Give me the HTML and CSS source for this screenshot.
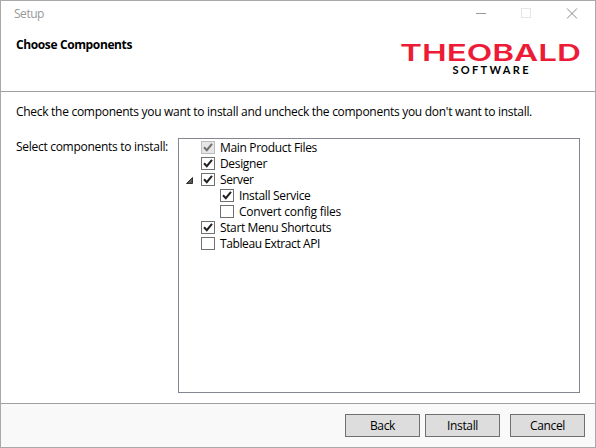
FILE: index.html
```html
<!DOCTYPE html>
<html lang="en">
<head>
<meta charset="utf-8">
<title>Setup</title>
<link rel="stylesheet" href="styles.css">
</head>
<body>
<main class="window">
  <header class="header">
    <div class="titlebar">
      <span class="caption">Setup</span>
      <svg class="controls" width="110" height="14" viewBox="0 0 110 14" fill="none">
        <path d="M6 6.5h10" stroke="#999"/>
        <rect x="51.5" y="1.5" width="9" height="9" stroke="#e6e6e6"/>
        <path d="M97 1.5l10 10M107 1.5l-10 10" stroke="#888"/>
      </svg>
    </div>
    <div class="banner">
      <h1 class="heading">Choose Components</h1>
      <svg class="logo" width="184" height="44" viewBox="0 -6 184 44">
        <text class="logo-name" x="1" y="18.5" textLength="181" lengthAdjust="spacingAndGlyphs">THEOBALD</text>
        <text class="logo-sub" x="53.5" y="31.5" textLength="76">SOFTWARE</text>
      </svg>
    </div>
  </header>
  <section class="content">
    <p class="intro">Check the components you want to install and uncheck the components you don't want to install.</p>
    <div class="selector">
      <span class="label">Select components to install:</span>
      <ul class="tree">
        <li class="item"><span class="box disabled"><svg viewBox="0 0 12 11"><path d="M2 5.2l2.8 3L10 1.8"/></svg></span><span class="t-main">Main Product Files</span></li>
        <li class="item"><span class="box"><svg viewBox="0 0 12 11"><path d="M2 5.2l2.8 3L10 1.8"/></svg></span><span class="t-designer">Designer</span></li>
        <li class="item parent"><svg class="arrow" width="7" height="7" viewBox="0 0 7 7"><path d="M6.5 .5v6h-6z"/></svg><span class="box"><svg viewBox="0 0 12 11"><path d="M2 5.2l2.8 3L10 1.8"/></svg></span><span class="t-server">Server</span></li>
        <li class="item child"><span class="box"><svg viewBox="0 0 12 11"><path d="M2 5.2l2.8 3L10 1.8"/></svg></span><span class="t-service">Install Service</span></li>
        <li class="item child"><span class="box"></span><span class="t-convert">Convert config files</span></li>
        <li class="item"><span class="box"><svg viewBox="0 0 12 11"><path d="M2 5.2l2.8 3L10 1.8"/></svg></span><span class="t-start">Start Menu Shortcuts</span></li>
        <li class="item"><span class="box"></span><span class="t-tableau">Tableau Extract API</span></li>
      </ul>
    </div>
  </section>
  <footer class="footer">
    <button class="button">Back</button>
    <button class="button">Install</button>
    <button class="button cancel">Cancel</button>
  </footer>
</main>
</body>
</html>
```
FILE: styles.css
```css
* { box-sizing: border-box; }
body {
  margin: 0;
  font: 12px/16px "Open Sans", "Noto Sans", sans-serif;
  letter-spacing: -0.35px;
  color: #000;
}
.window {
  display: flex;
  flex-direction: column;
  width: 596px;
  height: 448px;
  border: 1px solid #a9a9a9;
  background: #fff;
}
.header { height: 91px; border-bottom: 1px solid #a0a0a0; }
.titlebar {
  display: flex;
  justify-content: space-between;
  height: 28px;
  padding: 5px 13px 0;
  color: #999;
}
.caption { letter-spacing: -0.46px; }
.controls { margin: 1px 2px 0 0; }
.banner {
  display: flex;
  justify-content: space-between;
  padding: 8px 12px 0 15px;
}
.heading { margin: 0; font-size: 12px; line-height: 16px; letter-spacing: -0.38px; }
.logo { margin-top: -1px; overflow: visible; }
.logo-name {
  font: 600 22.5px "Inter", sans-serif;
  letter-spacing: 0;
  fill: #ed1b36;
}
.logo-sub { font: 700 11px "Lato", sans-serif; letter-spacing: 0; fill: #000; }
.content { flex: 1; padding: 12px 15px 0; }
.intro { margin: 0 0 18px; letter-spacing: -0.287px; white-space: nowrap; }
.selector { display: flex; justify-content: space-between; }
.label { padding-top: 1px; letter-spacing: -0.287px; white-space: nowrap; }
.tree {
  width: 402px;
  height: 255px;
  margin: 0;
  padding: 1px 0 0 22px;
  border: 1px solid #828790;
  list-style: none;
}
.item { display: flex; align-items: flex-start; gap: 5px; height: 16px; white-space: nowrap; }
.parent { margin-left: -15px; }
.arrow { margin: 5px 3px 0 0; fill: #595959; stroke: #333; }
.child { padding-left: 19px; }
.box {
  display: flex;
  width: 14px;
  height: 13px;
  margin-top: 1px;
  border: 1px solid #707070;
  background: #fff;
}
.box svg { width: 12px; height: 11px; fill: none; stroke: #212121; stroke-width: 2; }
.disabled { border-color: #bcbcbc; background: #e6e6e6; }
.disabled svg { stroke: #707070; }
.t-main { letter-spacing: -0.326px; }
.t-designer { letter-spacing: -0.339px; }
.t-server { letter-spacing: -0.393px; }
.t-service { letter-spacing: -0.319px; }
.t-convert { letter-spacing: -0.237px; }
.t-start { letter-spacing: -0.382px; }
.t-tableau { letter-spacing: -0.402px; }
.footer {
  display: flex;
  justify-content: flex-end;
  gap: 5px;
  height: 44px;
  padding: 10px 10px 0;
  border-top: 1px solid #a0a0a0;
  background: #f9f9f9;
}
.button {
  width: 75px;
  height: 23px;
  padding: 0;
  border: 1px solid #707070;
  background: #ddd;
  color: #000;
  font: inherit;
  letter-spacing: inherit;
}
.cancel { margin-left: 5px; }
```
